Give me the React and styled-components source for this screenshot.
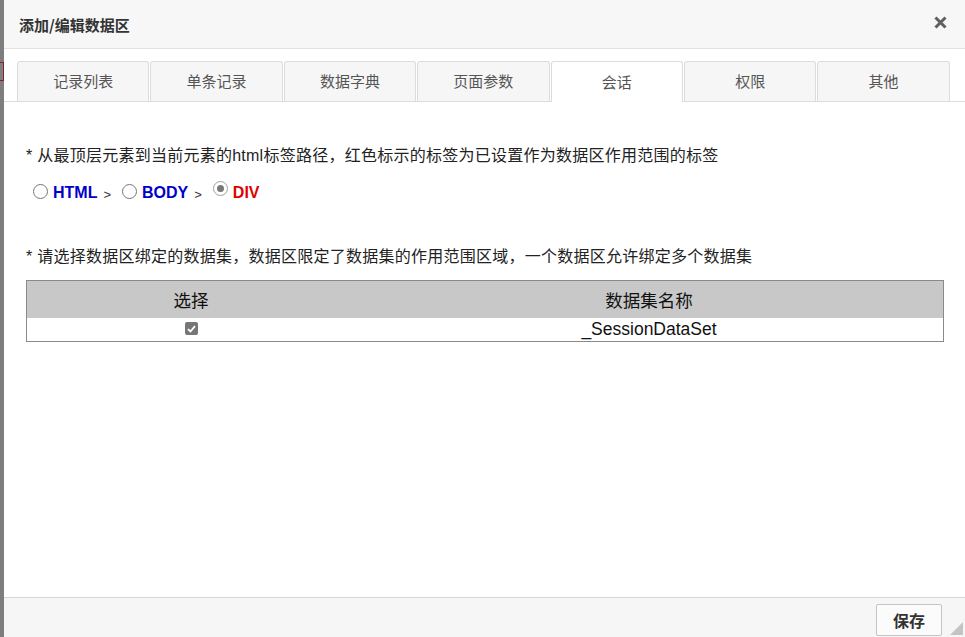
import React from "react";
import styled, { createGlobalStyle } from "styled-components";

const Global = createGlobalStyle`
  html, body { margin: 0; padding: 0; height: 100%; }
  body { font-family: "Liberation Sans", "Noto Sans CJK SC", sans-serif; }
  #root { height: 100%; }
`

const Page = styled.div`
  display: grid;
  grid-template-columns: 4px 1fr;
  width: 965px;
  height: 637px;
  overflow: hidden;
`
const Backdrop = styled.div`
  background: #7e7e7e;
  position: relative;
`
const BackMark = styled.div`
  position: absolute;
  left: -4px;
  top: 62px;
  width: 6px;
  height: 17px;
  border: 1px solid #8a2020;
`
const Dialog = styled.div`
  display: flex;
  flex-direction: column;
  background: #fff;
  position: relative;
`
const Header = styled.div`
  height: 48px;
  display: flex;
  align-items: center;
  justify-content: space-between;
  padding: 0 18px 0 15px;
  background: #f7f7f7;
  border-bottom: 1px solid #e2e2e2;
`
const Title = styled.div`
  font-family: "Noto Sans CJK SC", sans-serif;
  font-size: 15px;
  font-weight: bold;
  color: #333;
`
const Close = styled.svg`
  display: block;
  margin-top: -4px;
`
const TabBar = styled.div`
  display: flex;
  padding: 12px 0 0 13px;
  border-bottom: 1px solid #dcdcdc;
`
const Tab = styled.div`
  width: 132.4px;
  box-sizing: border-box;
  display: flex;
  align-items: center;
  justify-content: center;
  padding-bottom: 2px;
  font-family: "Noto Sans CJK SC", sans-serif;
  font-size: 15px;
  color: #555;
  background: ${p => (p.active ? "#fff" : "#f6f6f6")};
  border: 1px solid #dcdcdc;
  border-bottom: none;
  border-radius: 3px 3px 0 0;
  margin-bottom: ${p => (p.active ? "-1px" : "0")};
  height: ${p => (p.active ? "41px" : "40px")};
  & + & { margin-left: 1px; }
`
const Body = styled.div`
  flex: 1;
  padding: 44px 21px 0 22px;
`
const Note = styled.div`
  font-size: 16px;
  line-height: 20px;
  letter-spacing: 0.25px;
  color: #222;
`
const PathRow = styled.div`
  display: flex;
  align-items: center;
  margin: 17px 0 0 7px;
  height: 20px;
`
const Radio = styled.span`
  width: 13px;
  height: 13px;
  border: 1px solid ${p => (p.checked ? "#a0a0a0" : "#777")};
  border-radius: 50%;
  box-sizing: content-box;
  display: inline-flex;
  align-items: center;
  justify-content: center;
  margin: ${p => (p.checked ? "-9px" : "-3px")} 5px 0 0;
  &::after {
    content: "";
    display: ${p => (p.checked ? "block" : "none")};
    width: 7px;
    height: 7px;
    border-radius: 50%;
    background: #777;
  }
`
const TagName = styled.span`
  font-size: 16px;
  font-weight: bold;
  color: ${p => (p.red ? "#e00000" : "#0000cc")};
`
const Sep = styled.span`
  font-size: 13px;
  color: #333;
  margin: 2px ${p => p.right || "11px"} 0 6px;
`
const Note2 = styled(Note)`
  margin-top: 44px;
`
const Table = styled.table`
  margin-top: 13px;
  width: 918px;
  border-collapse: collapse;
  border: 1px solid #8a8a8a;
  font-size: 17.5px;
  color: #111;
`
const Th = styled.th`
  background: #c8c8c8;
  font-family: "Noto Sans CJK SC", sans-serif;
  font-size: 17.5px;
  font-weight: normal;
  height: 37px;
  padding: 0;
  width: ${p => p.w || "auto"};
`
const Td = styled.td`
  text-align: center;
  height: 23px;
  padding: 0;
`
const Check = styled.span`
  display: inline-flex;
  align-items: center;
  justify-content: center;
  width: 13px;
  height: 13px;
  border-radius: 2px;
  background: #767676;
  vertical-align: middle;
  margin-top: -3px;
`
const Footer = styled.div`
  height: 40px;
  border-top: 1px solid #d6d6d6;
  background: #f6f6f6;
  display: flex;
  justify-content: flex-end;
  align-items: flex-start;
  padding: 6px 23px 0 0;
  box-sizing: border-box;
`
const Button = styled.button`
  width: 66px;
  height: 32px;
  border: 1px solid #c4c4c4;
  border-radius: 2px;
  background: #fbfbfb;
  font-family: "Noto Sans CJK SC", sans-serif;
  font-size: 16px;
  font-weight: bold;
  color: #333;
  padding: 0;
`
const Grip = styled.div`
  position: absolute;
  right: 2px;
  bottom: 2px;
  width: 0;
  height: 0;
  border-left: 13px solid transparent;
  border-bottom: 13px solid #c4c4c4;
`

const tabs = ["记录列表", "单条记录", "数据字典", "页面参数", "会话", "权限", "其他"]

const App = () => {
  return (
    <Page>
      <Global />
      <Backdrop>
        <BackMark />
      </Backdrop>
      <Dialog>
        <Header>
          <Title>添加/编辑数据区</Title>
          <Close width="13" height="13" viewBox="0 0 13 13">
            <path d="M1.5 1.5 L11.5 11.5 M11.5 1.5 L1.5 11.5" stroke="#5f5f5f" strokeWidth="3" />
          </Close>
        </Header>
        <TabBar>
          {tabs.map(t => (
            <Tab key={t} active={t === "会话"}>{t}</Tab>
          ))}
        </TabBar>
        <Body>
          <Note>* 从最顶层元素到当前元素的html标签路径，红色标示的标签为已设置作为数据区作用范围的标签</Note>
          <PathRow>
            <Radio />
            <TagName>HTML</TagName>
            <Sep>&gt;</Sep>
            <Radio />
            <TagName>BODY</TagName>
            <Sep right="11px">&gt;</Sep>
            <Radio checked />
            <TagName red>DIV</TagName>
          </PathRow>
          <Note2>* 请选择数据区绑定的数据集，数据区限定了数据集的作用范围区域，一个数据区允许绑定多个数据集</Note2>
          <Table>
            <thead>
              <tr>
                <Th w="328px">选择</Th>
                <Th>数据集名称</Th>
              </tr>
            </thead>
            <tbody>
              <tr>
                <Td>
                  <Check>
                    <svg width="9" height="8" viewBox="0 0 9 8">
                      <path d="M1 4.2 L3.4 6.5 L8 1.2" stroke="#fff" strokeWidth="1.8" fill="none" />
                    </svg>
                  </Check>
                </Td>
                <Td>_SessionDataSet</Td>
              </tr>
            </tbody>
          </Table>
        </Body>
        <Footer>
          <Button>保存</Button>
        </Footer>
        <Grip />
      </Dialog>
    </Page>
  );
};

export default App;
